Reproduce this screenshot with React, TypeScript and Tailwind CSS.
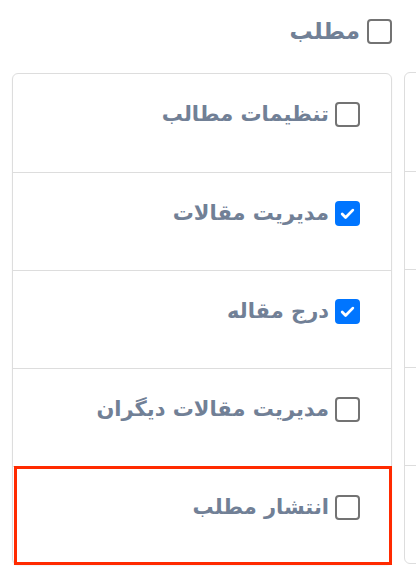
import React from 'react';

type Perm = { title: string; checked: boolean };

const items: Perm[] = [
	{ title: 'تنظیمات مطالب', checked: false },
	{ title: 'مدیریت مقالات', checked: true },
	{ title: 'درج مقاله', checked: true },
	{ title: 'مدیریت مقالات دیگران', checked: false },
	{ title: 'انتشار مطلب', checked: false },
];

function Check({ checked }: { checked: boolean }) {
	if (checked) {
		return (
			<span className="flex h-[25px] w-[25px] shrink-0 items-center justify-center rounded-[4px] bg-[#0075ff]">
				<svg viewBox="0 0 16 16" className="h-[17px] w-[17px]" fill="none">
					<path
						d="M3 8.5l3.2 3.2L13 4.8"
						stroke="white"
						strokeWidth="2.6"
						strokeLinecap="round"
						strokeLinejoin="round"
					/>
				</svg>
			</span>
		);
	}
	return (
		<span className="block h-[25px] w-[25px] shrink-0 rounded-[4px] border-[2px] border-[#737373] bg-white" />
	);
}

export default function App() {
	return (
		<div
			className="h-[586px] w-[416px] overflow-hidden bg-white"
			style={{ fontFamily: '"DejaVu Sans", sans-serif' }}
		>
			<div className="flex gap-3 pl-3 pt-[19px]">
				<div dir="rtl" className="w-[380px] shrink-0">
					<label className="flex h-[25px] items-center gap-[7px]">
						<Check checked={false} />
						<span className="text-[23px] font-bold text-[#718096]">مطلب</span>
					</label>

					<ul className="mt-[29px] rounded-md border border-[#dddddd] shadow-[0_1px_2px_rgba(0,0,0,0.06)]">
						{items.map((item, j) => (
							<li
								key={j}
								className={
									j === 0
										? 'h-[98px] pr-[31px] pt-[25px]'
										: 'relative h-[98px] border-t border-[#dddddd] pr-[31px] pt-[25px]'
								}
							>
								<label className="flex items-center gap-[6px]">
									<Check checked={item.checked} />
									<span className="text-[21px] font-bold text-[#718096]">
										{item.title}
									</span>
								</label>
								{j === items.length - 1 && (
									<div className="absolute -bottom-px -right-px -top-px left-px border-[3px] border-[#ff2a00]" />
								)}
							</li>
						))}
					</ul>
				</div>

				{/* next permission group, mostly off screen */}
				<div aria-hidden className="w-[380px] shrink-0 pt-[53px]">
					<div className="rounded-md border border-[#dddddd]">
						{items.map((_, j) => (
							<div
								key={j}
								className={j === 0 ? 'h-[98px]' : 'h-[98px] border-t border-[#dddddd]'}
							/>
						))}
					</div>
				</div>
			</div>
		</div>
	);
}
